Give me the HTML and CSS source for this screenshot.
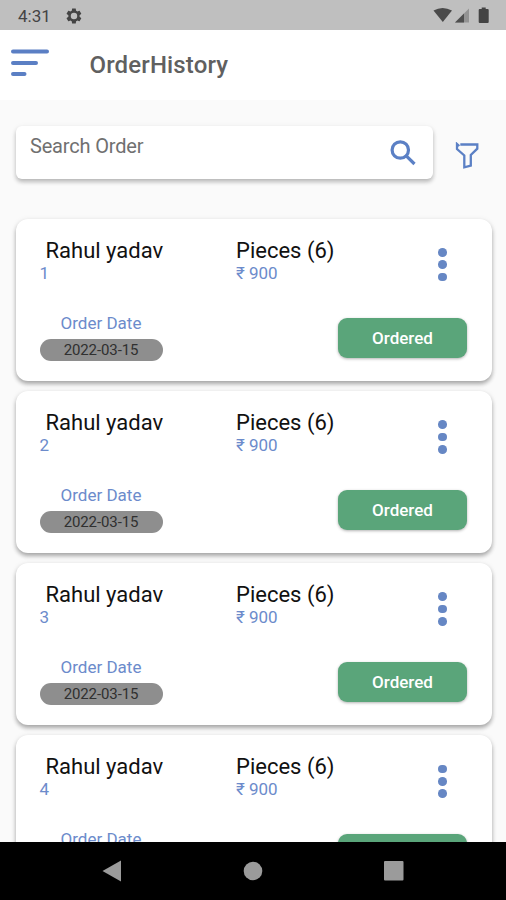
FILE: index.html
```html
<!DOCTYPE html>
<html lang="en">
<head>
<meta charset="utf-8">
<title>OrderHistory</title>
<link rel="stylesheet" href="styles.css">
</head>
<body>
<div class="status">
  <span class="clock">4:31</span>
  <svg class="gear" width="18" height="18" viewBox="0 0 24 24"><path fill="#444" fill-rule="evenodd" d="M19.4 13c.1-.3.1-.6.1-1s0-.7-.1-1l2.1-1.600c.2-.2.3-.4.100-.6l-2-3.500c-.1-.2-.4-.3-.6-.2l-2.500 1c-.5-.4-1.100-.7-1.700-1l-.4-2.600c0-.3-.2-.5-.5-.5h-4c-.3 0-.5.2-.5.5l-.4 2.600c-.6.3-1.200.6-1.700 1l-2.500-1c-.2-.1-.5 0-.6.2l-2 3.500c-.1.2-.1.500.1.600L4.500 11v2l-2.200 1.600c-.2.200-.2.400-.1.600l2 3.500c.1.200.4.300.6.200l2.500-1c.5.400 1.100.700 1.700 1l.4 2.600c0 .3.2.5.5.5h4c.3 0 .5-.2.5-.5l.4-2.600c.6-.3 1.200-.6 1.700-1l2.500 1c.2.100.5 0 .6-.2l2-3.500c.1-.2.1-.4-.1-.6zM12 16.300a4.300 4.300 0 1 1 0-8.600 4.300 4.300 0 0 1 0 8.600z"/></svg>
  <svg class="signals" width="57" height="18" viewBox="0 0 57 18"><path fill="#4a4a4a" d="M0.500 3.500Q9.500-1.500 19 3.500L9.800 15z"/><path fill="#939393" d="M22 15.500L36 1.500v14z"/><path fill="#4f4f4f" d="M22 15.500L31 6.500v9z"/><path fill="#444" d="M46.700 2h2V.5h4V2h2q1 0 1 1v12q0 1-1 1h-8q-1 0-1-1V3q0-1 1-1z"/></svg>
</div>
<header class="bar">
  <svg class="menu" width="38" height="28" viewBox="0 0 38 28" stroke="#5b7fc4" stroke-width="4" stroke-linecap="round"><path d="M2 2.500h34M2 14h23M2 25h11.500"/></svg>
  <h1>OrderHistory</h1>
</header>
<main>
  <div class="tools">
    <div class="search">
      <span>Search Order</span>
      <svg width="26" height="26" viewBox="0 0 26 26" fill="none" stroke="#5b80c5" stroke-width="3.200"><circle cx="10.300" cy="10" r="8.200"/><path d="M16 15.700L24.500 24"/></svg>
    </div>
    <svg class="filter" width="24" height="28" viewBox="0 0 24 28" fill="none" stroke="#5b80c5" stroke-width="2.300"><path d="M5.300 2.500H22.300V6.700L15.800 13V23.700L9.300 25.300V13.500L2 7V2L4.300 4"/></svg>
  </div>
  <section class="list">
    <article class="card">
      <div class="who"><h2>Rahul yadav</h2><p>1</p></div>
      <div class="what"><h2>Pieces (6)</h2><p>₹ 900</p></div>
      <div class="dots"><i></i><i></i><i></i></div>
      <div class="date"><p>Order Date</p><span>2022-03-15</span></div>
      <button>Ordered</button>
    </article>
    <article class="card">
      <div class="who"><h2>Rahul yadav</h2><p>2</p></div>
      <div class="what"><h2>Pieces (6)</h2><p>₹ 900</p></div>
      <div class="dots"><i></i><i></i><i></i></div>
      <div class="date"><p>Order Date</p><span>2022-03-15</span></div>
      <button>Ordered</button>
    </article>
    <article class="card">
      <div class="who"><h2>Rahul yadav</h2><p>3</p></div>
      <div class="what"><h2>Pieces (6)</h2><p>₹ 900</p></div>
      <div class="dots"><i></i><i></i><i></i></div>
      <div class="date"><p>Order Date</p><span>2022-03-15</span></div>
      <button>Ordered</button>
    </article>
    <article class="card">
      <div class="who"><h2>Rahul yadav</h2><p>4</p></div>
      <div class="what"><h2>Pieces (6)</h2><p>₹ 900</p></div>
      <div class="dots"><i></i><i></i><i></i></div>
      <div class="date"><p>Order Date</p><span>2022-03-15</span></div>
      <button>Ordered</button>
    </article>
  </section>
</main>
<nav class="nav">
  <svg width="20" height="22" viewBox="0 0 20 22"><path fill="#9b9b9b" d="M19 .5v21L.5 11z"/></svg>
  <svg width="20" height="20" viewBox="0 0 20 20"><circle cx="10" cy="10" r="9.300" fill="#9b9b9b"/></svg>
  <svg width="20" height="20" viewBox="0 0 20 20"><rect width="19.500" height="19.500" rx="1" fill="#9b9b9b"/></svg>
</nav>
</body>
</html>
```
FILE: styles.css
```css
* { box-sizing: border-box; margin: 0; padding: 0; }
body {
  width: 506px;
  height: 900px;
  overflow: hidden;
  display: flex;
  flex-direction: column;
  background: #fafafa;
  font-family: Roboto, "Noto Sans", sans-serif;
}
svg { display: block; flex: none; }
.status {
  flex: none;
  height: 30px;
  display: flex;
  align-items: center;
  padding: 1px 16px 0 18px;
  background: #bfbfbf;
}
.clock { width: 47px; font-size: 17px; line-height: 20px; color: #444; }
.signals { margin-left: auto; }
.bar {
  flex: none;
  height: 70px;
  display: flex;
  align-items: center;
  padding: 0 10.500px 4px;
  background: #fff;
}
h1 {
  margin: 4px 0 0 41px;
  font-size: 24px;
  font-weight: 500;
  letter-spacing: .15px;
  line-height: 30px;
  color: #606060;
}
main { flex: 1; min-height: 0; overflow: hidden; }
.tools { display: flex; height: 118.500px; padding: 26px 0 0 15.500px; }
.search {
  width: 417px;
  height: 53px;
  display: flex;
  justify-content: space-between;
  padding: 14px 17px 0 14.500px;
  border-radius: 6px;
  background: #fff;
  box-shadow: 0 3px 4px rgba(0, 0, 0, .24), 0 1px 6px rgba(0, 0, 0, .06);
}
.search span {
  margin-top: -6px;
  font-size: 20px;
  letter-spacing: -.18px;
  line-height: 24px;
  color: #707070;
}
.filter { margin: 16px 0 0 22px; }
.list { display: flex; flex-direction: column; gap: 10.200px; padding: 0 14px 0 15.500px; }
.card {
  flex: none;
  height: 162px;
  display: grid;
  grid-template-columns: 196.500px 196px 1fr;
  grid-template-rows: 75px 1fr;
  padding: 19px 25px 0 24px;
  border-radius: 12px;
  background: #fff;
  box-shadow: 0 3px 4px rgba(0, 0, 0, .3), 0 1px 6px rgba(0, 0, 0, .08);
}
h2 { font-size: 22px; font-weight: 400; line-height: 26px; color: #111; white-space: nowrap; }
.card p { font-size: 17px; line-height: 20px; color: #6c8bcb; }
.who p, .what p { margin-top: -.6px; }
.who h2 { padding-left: 6px; }
.dots { display: flex; flex-direction: column; gap: 3.700px; padding: 10.500px 0 0 6px; }
.dots i { width: 8.700px; height: 8.700px; border-radius: 50%; background: #6687c4; }
.date { width: 123px; text-align: center; }
.date span {
  display: block;
  height: 22px;
  margin-top: 6.500px;
  border-radius: 11px;
  background: #8e8e8e;
  color: #303030;
  font-size: 15px;
  letter-spacing: -.1px;
  line-height: 22px;
}
.card button {
  grid-column: 2 / 4;
  justify-self: end;
  width: 129px;
  height: 40px;
  margin-top: 5px;
  border: 0;
  border-radius: 9px;
  background: #5aa57a;
  box-shadow: 0 1px 3px rgba(0, 0, 0, .3);
  color: #fff;
  font-family: inherit;
  font-size: 17px;
  font-weight: 500;
}
.nav {
  flex: none;
  height: 58px;
  display: flex;
  justify-content: space-between;
  align-items: center;
  padding: 0 102px;
  background: #000;
}
```
